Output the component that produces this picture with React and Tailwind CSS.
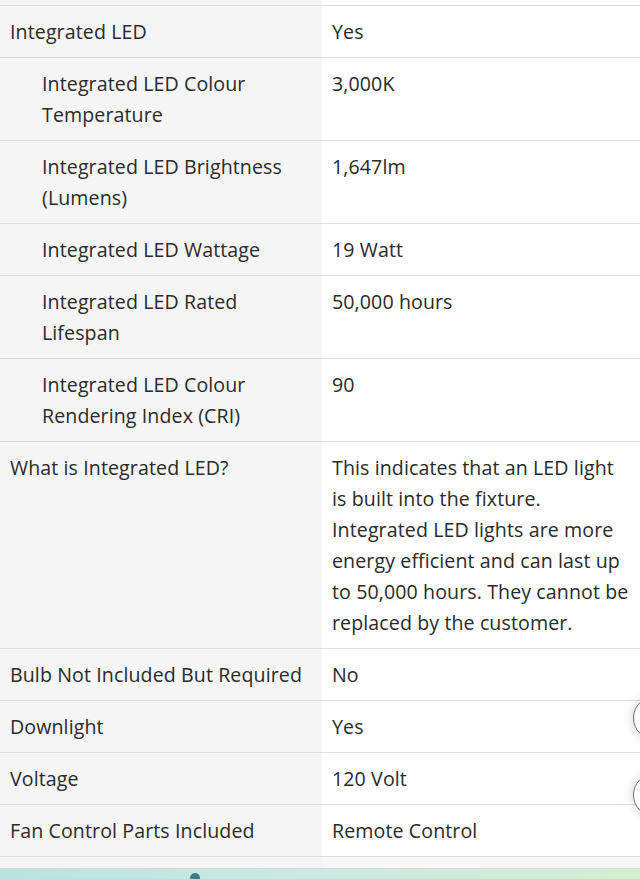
import React from 'react';

const description = [
  'This indicates that an LED light',
  'is built into the fixture.',
  'Integrated LED lights are more',
  'energy efficient and can last up',
  'to 50,000 hours. They cannot be',
  'replaced by the customer.',
];

const rows = [
  { label: 'Integrated LED', value: 'Yes' },
  { label: 'Integrated LED Colour Temperature', value: '3,000K', sub: true },
  { label: 'Integrated LED Brightness (Lumens)', value: '1,647lm', sub: true },
  { label: 'Integrated LED Wattage', value: '19 Watt', sub: true },
  { label: 'Integrated LED Rated Lifespan', value: '50,000 hours', sub: true },
  { label: 'Integrated LED Colour Rendering Index (CRI)', value: '90', sub: true },
  {
    label: 'What is Integrated LED?',
    value: description.map((line) => (
      <span key={line} className="block whitespace-nowrap">{line}</span>
    )),
  },
  { label: 'Bulb Not Included But Required', value: 'No' },
  { label: 'Downlight', value: 'Yes' },
  { label: 'Voltage', value: '120 Volt' },
  { label: 'Fan Control Parts Included', value: 'Remote Control' },
];

export default function App() {
  return (
    <div className="relative w-[640px] h-[879px] overflow-hidden bg-white text-[19.6px] tracking-[0.1px] leading-[31px] text-[#2a2a2a]" style={{ fontFamily: '"Open Sans", Lato, sans-serif' }}>
      <div className="grid grid-cols-[322px_318px]">
        <div className="h-[6px] bg-[#f5f5f5] border-b border-[#dedede]" />
        <div className="h-[6px] bg-white border-b border-[#dedede]" />
        {rows.map((r, i) => (
          <React.Fragment key={i}>
            <div className={`bg-[#f5f5f5] border-b border-[#dedede] py-[10px] pr-4 ${r.sub ? 'pl-[42px]' : 'pl-[10px]'}`}>
              {r.label}
            </div>
            <div className="bg-white border-b border-[#dedede] py-[10px] pl-[10px] pr-1 overflow-hidden">{r.value}</div>
          </React.Fragment>
        ))}
        <div className="h-[12px] bg-[#f5f5f5] border-b border-[#d6d6d6]" />
        <div className="h-[12px] bg-[#f7f7f7] border-b border-[#d6d6d6]" />
      </div>
      <div className="h-[12px] bg-gradient-to-r from-[#b9e3e0] via-[#cbeae2] to-[#d3efd0] relative">
        <div className="absolute left-[190px] top-[4px] w-[10px] h-[10px] rounded-full bg-[#3d7f86]" />
      </div>

      <button className="absolute left-[633px] top-[696px] w-[44px] h-[44px] rounded-full bg-white border-[1.5px] border-[#8c5aa8] shadow-[0_0_12px_rgba(0,0,0,0.18)]" />
      <button className="absolute left-[633px] top-[773px] w-[44px] h-[44px] rounded-full bg-white border-[1.5px] border-[#7a6f85] shadow-[0_0_12px_rgba(0,0,0,0.18)]" />
    </div>
  );
}
